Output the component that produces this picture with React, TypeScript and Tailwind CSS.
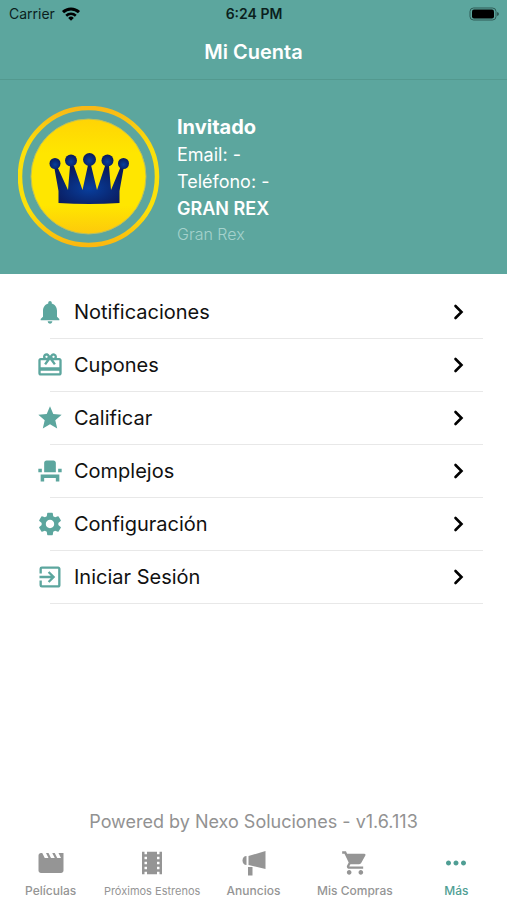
import {
  MdEventSeat,
  MdExitToApp,
  MdMoreHoriz,
  MdMovie,
  MdNotifications,
  MdRedeem,
  MdSettings,
  MdShoppingCart,
  MdStar,
  MdTheaters,
} from "react-icons/md";

const menuItems = [
  { icon: <MdNotifications size={28} />, label: "Notificaciones" },
  { icon: <MdRedeem size={28} />, label: "Cupones" },
  { icon: <MdStar size={28} />, label: "Calificar" },
  { icon: <MdEventSeat size={28} />, label: "Complejos" },
  { icon: <MdSettings size={28} />, label: "Configuración" },
  { icon: <MdExitToApp size={28} />, label: "Iniciar Sesión" },
];

const tabs = [
  { icon: <MdMovie size={30} />, label: "Películas", text: "text-xs font-medium" },
  { icon: <MdTheaters size={30} />, label: "Próximos Estrenos", text: "text-[11px]" },
  { icon: <Megaphone />, label: "Anuncios", text: "text-xs font-medium" },
  { icon: <MdShoppingCart size={28} />, label: "Mis Compras", text: "text-xs font-medium" },
  { icon: <MdMoreHoriz size={30} />, label: "Más", text: "text-xs font-medium", active: true },
];

function Megaphone() {
  return (
    <svg width="24" height="26" viewBox="0 0 24 26" fill="currentColor" aria-hidden="true">
      <path d="M4.5 6v9C2 15 .5 13 .5 10.5S2 6 4.5 6z" />
      <path d="M6.500 6L23.500 1v18L6.500 15z" />
      <path d="M6 17h4.500v8.500H6z" />
    </svg>
  );
}

function Chevron() {
  return (
    <svg width="12" height="16" viewBox="0 0 12 16" fill="none" stroke="#000" strokeWidth="2.6" aria-hidden="true">
      <path d="M2.5 2l6 6-6 6" strokeLinecap="round" />
    </svg>
  );
}

function StatusBar() {
  return (
    <div className="grid h-7 grid-cols-3 items-center pr-2 pl-[9px] text-sm text-[#0b1f1d]">
      <div className="flex items-center gap-[6px]">
        <span>Carrier</span>
        <svg width="20" height="16" viewBox="0 0 20 16" fill="none" stroke="#000" strokeWidth="3" aria-hidden="true">
          <path d="M2 6.2a11.5 11.5 0 0 1 16 0" />
          <path d="M5.2 9.7a7 7 0 0 1 9.6 0" strokeWidth="2.6" />
          <path d="M10 14.8l-2.8-2.9a4 4 0 0 1 5.6 0z" fill="#000" stroke="none" />
        </svg>
      </div>
      <span className="text-center font-semibold">6:24 PM</span>
      <svg className="justify-self-end" width="30" height="14" viewBox="0 0 30 14" aria-hidden="true">
        <rect x="1" y="1" width="26" height="12" rx="3.5" fill="none" stroke="#2f5b56" />
        <rect x="3" y="2.5" width="22" height="9" rx="2" fill="#000" />
        <path d="M28 5v4q2-.6 2-2t-2-2z" fill="#2f5b56" />
      </svg>
    </div>
  );
}

function CrownLogo() {
  return (
    <svg className="size-[142px] shrink-0" viewBox="0 0 142 142" role="img" aria-label="Gran Rex">
      <defs>
        <linearGradient id="ring" x1="0" y1="0" x2="0" y2="1">
          <stop offset="0" stopColor="#f9b916" />
          <stop offset="0.3" stopColor="#fbe00b" />
          <stop offset="0.75" stopColor="#fbe00b" />
          <stop offset="1" stopColor="#fbb80f" />
        </linearGradient>
        <linearGradient id="disc" x1="0" y1="0" x2="0" y2="1">
          <stop offset="0" stopColor="#ffd405" />
          <stop offset="0.3" stopColor="#ffe600" />
          <stop offset="0.75" stopColor="#ffe600" />
          <stop offset="1" stopColor="#fdc90b" />
        </linearGradient>
        <radialGradient id="crown" cx="0.5" cy="0.6" r="0.55">
          <stop offset="0" stopColor="#083f9e" />
          <stop offset="1" stopColor="#0a1c5e" />
        </radialGradient>
      </defs>
      <circle cx="70.5" cy="70.5" r="68.5" fill="none" stroke="url(#ring)" strokeWidth="4.5" />
      <circle cx="70.5" cy="70.5" r="57.5" fill="url(#disc)" stroke="#b8bf62" />
      <g fill="url(#crown)">
        <path d="M40.5 85L36 60h3l11 24 2-24h4l8.5 24L70 59h3l6 25 8-24h4l2 24 10-24h3l-4.5 25v12Q71 99 40.5 97z" />
        <circle cx="37" cy="57.5" r="5.5" />
        <circle cx="53" cy="54.5" r="6" />
        <circle cx="71.5" cy="53.5" r="6.5" />
        <circle cx="89.5" cy="54.5" r="6" />
        <circle cx="105.5" cy="57.5" r="5.5" />
      </g>
    </svg>
  );
}

export default function App() {
  return (
    <div className="flex min-h-screen flex-col bg-white font-[Inter,'Liberation_Sans',sans-serif]">
      <header className="bg-[#5ca69e]">
        <StatusBar />
        <h1 className="border-b border-[#53998f] pt-[9px] pb-[11px] text-center text-xl leading-[31px] font-semibold text-white">
          Mi Cuenta
        </h1>
        <section className="flex items-start gap-[17px] px-[18px] pt-[26px] pb-[26px] text-white">
          <CrownLogo />
          <div className="pt-2 text-lg leading-[27px]">
            <h2 className="text-xl leading-[27px] font-bold">Invitado</h2>
            <p>Email: -</p>
            <p>Teléfono: -</p>
            <p className="font-semibold">GRAN REX</p>
            <p className="text-base leading-6 font-light text-[#a5d2cc]">Gran Rex</p>
          </div>
        </section>
      </header>

      <main className="flex-1 pt-3 pr-6">
        <ul>
          {menuItems.map((item) => (
            <li key={item.label}>
              <button type="button" className="flex h-[52px] w-full items-stretch text-left">
                <span className="ml-[35px] flex w-[30px] items-center justify-center text-[#5ca69e]">{item.icon}</span>
                <span className="flex flex-1 items-center justify-between pr-[18px] pl-[9px] text-xl text-[#111]">
                  {item.label}
                  <Chevron />
                </span>
              </button>
              <div className="ml-[50px] border-b border-[#e8e8e8]" />
            </li>
          ))}
        </ul>
      </main>

      <footer>
        <p className="text-center text-lg leading-6 text-[#929292]">Powered by Nexo Soluciones - v1.6.113</p>
        <nav className="mt-[10px] flex">
          {tabs.map((tab) => (
            <button
              key={tab.label}
              type="button"
              className={`flex min-w-0 flex-1 flex-col items-center ${tab.active ? "text-[#4f9e94]" : "text-[#959595]"}`}
            >
              <span className="flex h-[38px] items-center">{tab.icon}</span>
              <span className={`leading-[18px] whitespace-nowrap ${tab.text}`}>{tab.label}</span>
            </button>
          ))}
        </nav>
      </footer>
    </div>
  );
}
